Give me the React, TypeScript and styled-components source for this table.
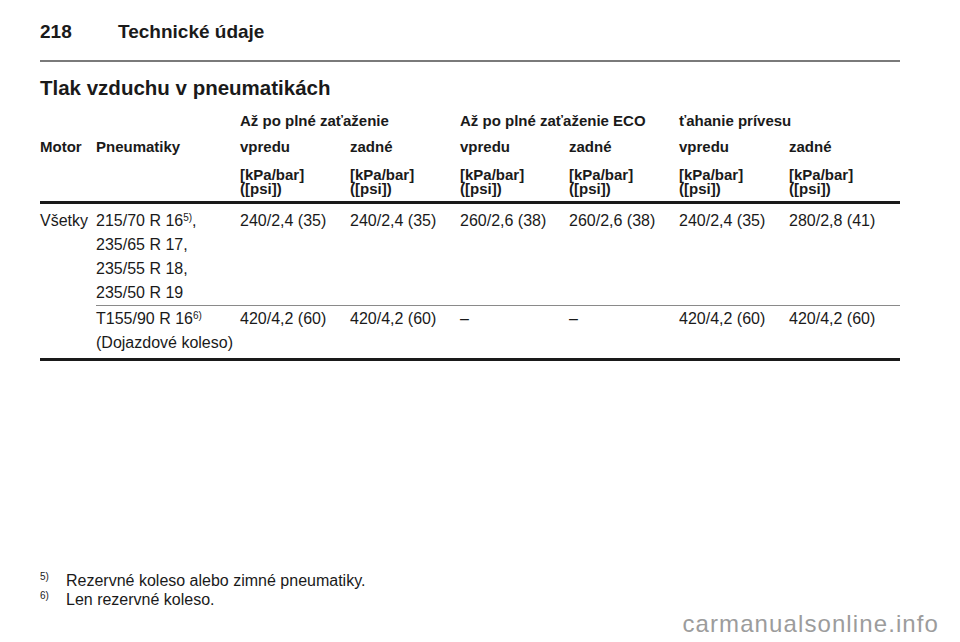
import React from "react";
import styled, { createGlobalStyle } from "styled-components";

const GlobalStyle = createGlobalStyle`
  html, body { margin: 0; padding: 0; background: #ffffff; }
  body {
    font-family: "Liberation Sans", Arial, Helvetica, sans-serif;
    color: #1a1a1a;
  }
`;

const Page = styled.div`
  box-sizing: border-box;
  width: 960px;
  height: 642px;
  padding: 20px 0 5px 40px;
  display: flex;
  flex-direction: column;
  overflow: hidden;
`;

const RunningHead = styled.header`
  display: flex;
  width: 860px;
  font-size: 19px;
  font-weight: 700;
  line-height: 24px;
`;

const PageNo = styled.span`
  width: 78px;
`;

const Rule = styled.hr`
  margin: 16px 0 0;
  width: 860px;
  height: 2px;
  border: 0;
  background: #7a7a7a;
`;

const Title = styled.h1`
  margin: 13px 0 0;
  font-size: 20.5px;
  line-height: 26px;
  font-weight: 700;
`;

const Table = styled.table`
  margin-top: 8px;
  width: 860px;
  table-layout: fixed;
  border-collapse: separate;
  border-spacing: 0;
`;

const Col = styled.col<{ $w: number }>`
  width: ${(p) => p.$w}px;
`;

type Line = "none" | "thin" | "thick";

const border = (l: Line | undefined) =>
  l === "thick"
    ? "border-bottom: 3px solid #1a1a1a;"
    : l === "thin"
    ? "border-bottom: 1px solid #8a8a8a;"
    : "border-bottom: 0;";

const HeadCell = styled.th<{ $pb: number; $lh: number; $line?: Line }>`
  padding: 0 0 ${(p) => p.$pb}px 0;
  text-align: left;
  vertical-align: top;
  font-size: 15px;
  font-weight: 700;
  white-space: nowrap;
  line-height: ${(p) => p.$lh}px;
  ${(p) => border(p.$line)}
`;

const DataCell = styled.td<{ $pt: number; $pb: number; $line: Line }>`
  padding: ${(p) => p.$pt}px 0 ${(p) => p.$pb}px 0;
  text-align: left;
  vertical-align: top;
  font-size: 16px;
  white-space: nowrap;
  line-height: 24px;
  ${(p) => border(p.$line)}
`;

const Sup = styled.sup`
  font-size: 10px;
  line-height: 0;
  vertical-align: 5px;
`;

const Footnotes = styled.ol`
  margin: auto 0 0;
  padding: 0;
  list-style: none;
  font-size: 16px;
  line-height: 19px;
`;

const Note = styled.li`
  display: flex;
  align-items: flex-start;
`;

const NoteMark = styled.span`
  width: 26px;
  font-size: 10px;
  line-height: 12px;
`;

const Watermark = styled.div`
  margin: 2px 21px 0 0;
  align-self: flex-end;
  font-size: 24px;
  line-height: 26px;
  letter-spacing: 1.1px;
  color: #9c9c9c;
`;

const widths = [56, 144, 110, 110, 109, 110, 110, 111];

const groups = ["Až po plné zaťaženie", "Až po plné zaťaženie ECO", "ťahanie prívesu"];
const sides = ["vpredu", "zadné", "vpredu", "zadné", "vpredu", "zadné"];

const row1 = ["240/2,4 (35)", "240/2,4 (35)", "260/2,6 (38)", "260/2,6 (38)", "240/2,4 (35)", "280/2,8 (41)"];
const row2 = ["420/4,2 (60)", "420/4,2 (60)", "–", "–", "420/4,2 (60)", "420/4,2 (60)"];

export default function App() {
  return (
    <>
      <GlobalStyle />
      <Page>
        <RunningHead>
          <PageNo>218</PageNo>
          <span>Technické údaje</span>
        </RunningHead>
        <Rule />
        <Title>Tlak vzduchu v pneumatikách</Title>
        <Table>
          <colgroup>
            {widths.map((w, i) => (
              <Col key={i} $w={w} />
            ))}
          </colgroup>
          <thead>
            <tr>
              <HeadCell colSpan={2} $pb={2} $lh={24} />
              {groups.map((g) => (
                <HeadCell key={g} colSpan={2} $pb={2} $lh={24}>
                  {g}
                </HeadCell>
              ))}
            </tr>
            <tr>
              <HeadCell $pb={9} $lh={24}>Motor</HeadCell>
              <HeadCell $pb={9} $lh={24}>Pneumatiky</HeadCell>
              {sides.map((s, i) => (
                <HeadCell key={i} $pb={9} $lh={24}>
                  {s}
                </HeadCell>
              ))}
            </tr>
            <tr>
              <HeadCell $pb={5} $lh={14} $line="thick" />
              <HeadCell $pb={5} $lh={14} $line="thick" />
              {sides.map((_, i) => (
                <HeadCell key={i} $pb={5} $lh={14} $line="thick">
                  [kPa/bar]
                  <br />
                  ([psi])
                </HeadCell>
              ))}
            </tr>
          </thead>
          <tbody>
            <tr>
              <DataCell rowSpan={2} $pt={5} $pb={0} $line="thick">
                Všetky
              </DataCell>
              <DataCell $pt={5} $pb={0} $line="thin">
                215/70 R 16<Sup>5)</Sup>,
                <br />
                235/65 R 17,
                <br />
                235/55 R 18,
                <br />
                235/50 R 19
              </DataCell>
              {row1.map((v, i) => (
                <DataCell key={i} $pt={5} $pb={0} $line="thin">
                  {v}
                </DataCell>
              ))}
            </tr>
            <tr>
              <DataCell $pt={1} $pb={3} $line="thick">
                T155/90 R 16<Sup>6)</Sup>
                <br />
                (Dojazdové koleso)
              </DataCell>
              {row2.map((v, i) => (
                <DataCell key={i} $pt={1} $pb={3} $line="thick">
                  {v}
                </DataCell>
              ))}
            </tr>
          </tbody>
        </Table>
        <Footnotes>
          <Note>
            <NoteMark>5)</NoteMark>
            <span>Rezervné koleso alebo zimné pneumatiky.</span>
          </Note>
          <Note>
            <NoteMark>6)</NoteMark>
            <span>Len rezervné koleso.</span>
          </Note>
        </Footnotes>
        <Watermark>carmanualsonline.info</Watermark>
      </Page>
    </>
  );
}
